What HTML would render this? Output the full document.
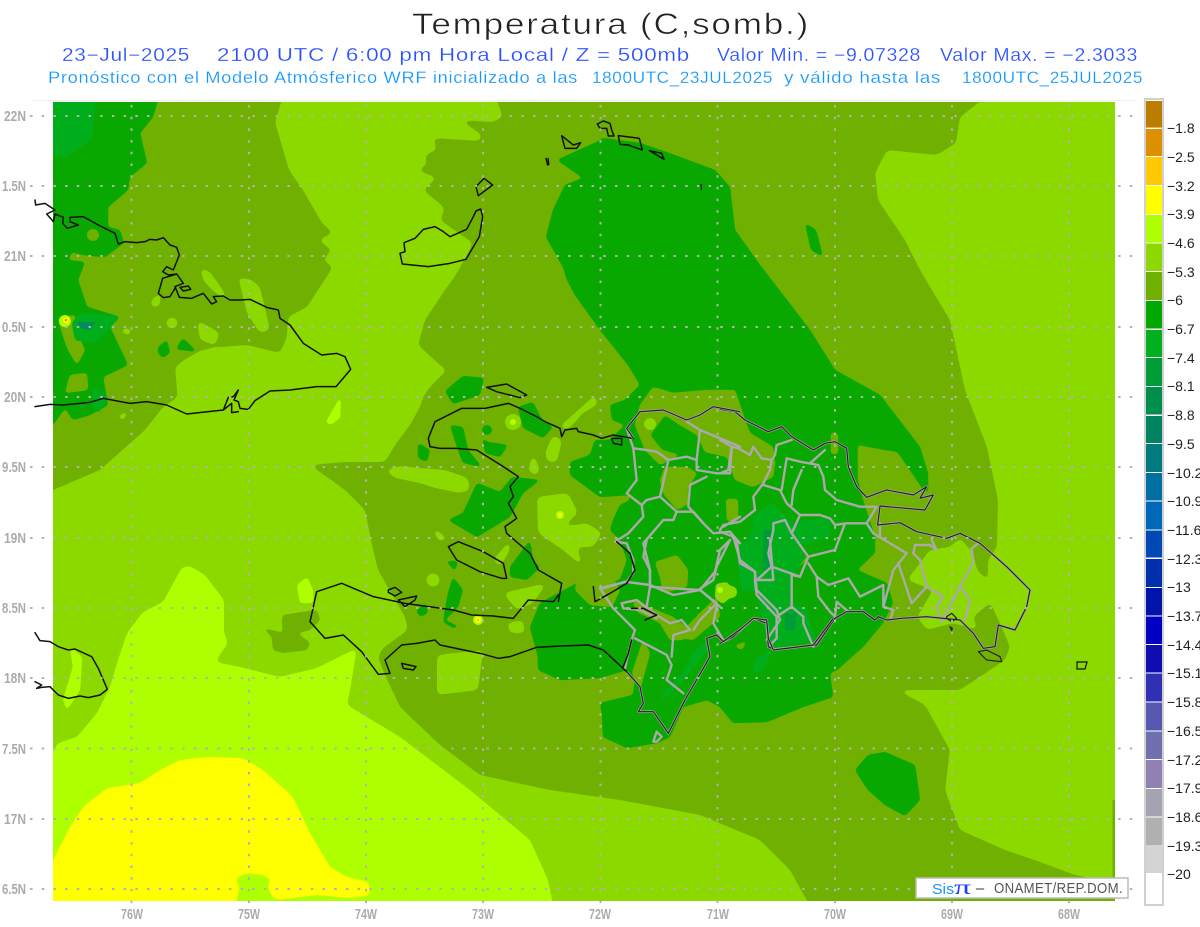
<!DOCTYPE html>
<html><head><meta charset="utf-8"><title>Temperatura (C,somb.)</title>
<style>
html,body{margin:0;padding:0;background:#fff}
svg{display:block}
text{font-family:"Liberation Sans",sans-serif}
.c path,.p path{vector-effect:non-scaling-stroke;fill:none;stroke-linejoin:round;stroke-linecap:round}
.c path{stroke:#111;stroke-width:1.500}
.p path{stroke:#aaa;stroke-width:2.400}
.u path{vector-effect:non-scaling-stroke;fill:none;stroke:#aaa;stroke-width:2.500;stroke-linejoin:round}
.d path{vector-effect:non-scaling-stroke;fill:none;stroke:#222;stroke-width:1.200;stroke-linejoin:round}
.lb text{font-size:15px;font-weight:bold;fill:#ababab}
.cb text{font-size:14px;fill:#222}
</style></head><body>
<svg width="1200" height="927" viewBox="0 0 1200 927" xmlns="http://www.w3.org/2000/svg">
<defs>
<filter id="s3" x="-5%" y="-5%" width="110%" height="110%" color-interpolation-filters="sRGB"><feGaussianBlur stdDeviation="3"/><feComponentTransfer><feFuncA type="linear" slope="14" intercept="-6.500"/></feComponentTransfer></filter>
<filter id="s2" x="-5%" y="-5%" width="110%" height="110%" color-interpolation-filters="sRGB"><feGaussianBlur stdDeviation="1.800"/><feComponentTransfer><feFuncA type="linear" slope="10" intercept="-4"/></feComponentTransfer></filter>
<clipPath id="m"><rect x="53" y="102" width="1062" height="799"/></clipPath>
</defs>
<rect width="1200" height="927" fill="#fff"/>
<text x="412" y="34" font-size="30" letter-spacing="1.500" textLength="398" lengthAdjust="spacingAndGlyphs" fill="#222" stroke="#fff" stroke-width="0.55">Temperatura (C,somb.)</text>
<g font-size="18" fill="#2a50ff" stroke="#fff" stroke-width="0.2" letter-spacing=".6">
<text x="62" y="61" textLength="128" lengthAdjust="spacingAndGlyphs">23−Jul−2025</text>
<text x="217" y="61" textLength="473" lengthAdjust="spacingAndGlyphs">2100 UTC / 6:00 pm Hora Local / Z = 500mb</text>
<text x="717" y="61" textLength="204" lengthAdjust="spacingAndGlyphs">Valor Min. = −9.07328</text>
<text x="940" y="61" textLength="198" lengthAdjust="spacingAndGlyphs">Valor Max. = −2.3033</text>
</g>
<g font-size="16.5" fill="#0f96ff" stroke="#fff" stroke-width="0.2" letter-spacing=".6">
<text x="48" y="83" textLength="530" lengthAdjust="spacingAndGlyphs">Pronóstico con el Modelo Atmósferico WRF inicializado a las</text>
<text x="592" y="83" textLength="181" lengthAdjust="spacingAndGlyphs">1800UTC_23JUL2025</text>
<text x="784" y="83" textLength="157" lengthAdjust="spacingAndGlyphs">y válido hasta las</text>
<text x="962" y="83" textLength="181" lengthAdjust="spacingAndGlyphs">1800UTC_25JUL2025</text>
</g>
<line x1="32" y1="100.5" x2="1135" y2="100.5" stroke="#eee"/>

<g clip-path="url(#m)">
<rect x="53" y="102" width="1062" height="799" fill="#70b000"/>
<!-- light -->
<g fill="#8cd900" filter="url(#s3)">
<path d="M285 90L493 90 503 117 493 122 460 120 482 135 480 141 433 138 437 150 425 155 427 165 417 170 437 178 423 190 445 208 440 220 473 243 457 273 445 290 425 320 418 345 440 365 447 370 430 387 423 397 420 407 410 425 395 445 385 462 345 462 310 465 345 490 365 510 372 545 378 570 405 617 408 630 383 648 378 657 385 675 400 707 440 745 480 775 550 790 620 800 700 815 760 840 790 870 815 915 40 915 40 497 53 490 100 470 145 430 163 407 178 397 177 390 175 367 187 358 202 350 220 347 247 345 280 353 287 337 288 317 307 307 333 267 323 260 332 250 318 240 333 233 322 223 303 190 289 170 275 122Z"/>
<path d="M995 90L1130 90 1130 880 1100 880 1075 875 1040 862 1005 850 960 830 945 790 950 750 925 705 897 690 960 690 1005 660 1010 647 1003 630 988 597 988 560 997 547 998 500 987 447 965 390 950 320 920 270 905 240 878 200 875 173 887 150 937 155 956 143 960 117Z"/>
<path d="M960 538L973 553 977 570 987 580 990 603 973 617 978 630 953 623 927 630 917 617 933 590 907 580 917 567 930 550 950 547Z"/>
<path d="M420 468L445 470 468 478 470 490 460 493 435 488 420 483 395 478 385 470 400 466Z"/>
<path d="M200 267L210 272 223 290 233 313 225 300 212 290 203 280Z"/>
<path d="M238 277L252 280 260 287 270 330 260 333 247 313Z"/>
<path d="M197 320L220 333 215 345 200 340Z"/>
<path d="M175 367L197 357 200 375 210 385 190 380 178 385Z"/>
<path d="M122 327L134 330 128 336 121 332Z"/><circle cx="172" cy="323" r="6"/><circle cx="433" cy="580" r="7"/>
<path d="M150 302L161 291 160 306 152 308Z"/><path d="M115 419L129 408 125 420Z"/>
<path d="M558 428L595 395 598 404 582 414 569 429Z"/>
<path d="M545 453L553 435 562 440 557 462 548 462Z"/><path d="M528 470L533 453 540 470 535 476Z"/>
<path d="M537 497L568 493 578 513 563 527 587 523 602 533 593 547 577 547 583 567 563 550 538 533Z"/>
<path d="M431 525L449 540 438 541Z"/><path d="M493 560L510 540 510 550 500 567Z"/>
<path d="M503 593L547 583 533 603 517 610Z"/><path d="M507 623L523 620 525 633 510 633Z"/>
<path d="M437 655L483 650 478 690 437 695Z"/>
</g>
<!-- olive in light -->
<g fill="#70b000" filter="url(#s2)">
<path d="M263 628L283 633 282 620 283 615 317 610 320 620 310 630 297 633 310 643 307 650 283 653 273 650 272 637Z"/>
</g>
<!-- lime and yellow -->
<g filter="url(#s3)">
<path fill="#aeff00" d="M40 915L40 770 58 743 77 737 97 713 110 687 117 663 127 633 143 612 163 602 182 567 190 566 205 575 224 600 224 633 228 643 215 662 240 667 280 677 317 668 357 648 350 690 347 705 400 737 470 790 530 840 548 880 555 915Z"/>
</g>
<g fill="#aeff00" filter="url(#s2)">
<path d="M70 647L82 657 80 690 67 710 63 700 73 667Z"/>
<path d="M326 422L341 396 340 418 330 425Z"/>
<path d="M297 585L307 577 313 590 313 603 300 603Z"/>
</g>
<path filter="url(#s3)" fill="#ffff00" d="M40 915L53 860 70 827 83 807 107 788 140 783 160 770 180 760 207 757 243 758 263 770 293 797 310 833 330 867 347 877 369 882 370 896 347 898 317 895 277 900 272 897 267 885 272 880 263 875 248 873 235 878 240 887 233 915Z"/>
<!-- green -->
<g fill="#08a800" filter="url(#s2)">
<path d="M40 90L161 90 153 117 140 133 147 163 130 177 128 190 108 207 108 227 120 230 124 243 105 257 83 255 72 252 68 260 85 262 83 267 78 280 87 307 120 317 110 327 128 365 103 377 107 400 108 405 90 415 73 420 65 408 53 425 40 425Z"/>
<path d="M597 142L603 138 640 143 669 153 715 170 730 187 735 230 760 265 810 330 835 370 880 395 920 447 928 473 928 493 923 490 897 452 858 445 858 480 862 497 875 537 875 553 857 570 887 583 893 603 883 623 863 647 837 670 830 673 833 697 803 707 767 722 733 723 720 707 707 700 683 707 670 737 657 743 627 748 603 737 602 713 600 703 633 695 635 680 627 670 600 678 560 680 538 670 538 657 530 627 540 603 583 580 600 585 620 580 627 560 620 540 610 530 613 520 620 505 630 500 630 495 600 497 570 475 570 462 590 455 595 440 610 440 625 425 612 420 610 405 625 400 640 385 628 365 600 330 575 295 567 280 563 267 546 237 553 210 565 185 583 178 557 160 590 145Z"/>
<path d="M855 770L868 755 885 752 915 765 920 800 905 816 885 805 868 790Z"/>
<path d="M445 391L463 376 484 378 480 395 453 404Z"/>
<path d="M518 407L533 402 542 420 553 427 543 438 523 428Z"/>
<path d="M450 425L463 427 468 450 482 467 463 463 457 447Z"/>
<path d="M482 437L487 442 508 445 500 457 485 453Z"/>
<path d="M418 443L430 450 427 462 418 458Z"/>
<path d="M512 477L540 480 523 493 510 517 477 537 448 520 463 513 477 483 500 492Z"/>
<path d="M510 567L530 540 533 560 540 567 527 580 510 577Z"/>
<path d="M448 593L453 577 463 590 458 607 445 620 460 627 453 628 443 622Z"/>
<path d="M416 610L426 603 428 613 420 617Z"/><path d="M446 561L458 561 455 571Z"/>
<path d="M805 223L816 230 823 257 811 250Z"/>
<path d="M158 347L167 340 170 353 163 358 158 353Z"/><path d="M177 347L183 338 197 352 183 350 177 350Z"/>
<circle cx="487" cy="430" r="5"/>
</g>
<!-- olive over green -->
<g fill="#70b000" filter="url(#s2)">
<path d="M640 405L653 387 673 393 707 390 735 390 745 420 750 433 773 447 775 463 773 477 753 487 735 480 727 457 705 452 697 435 680 425 665 415 650 435 662 450 680 455 660 465 645 450 635 425Z"/>
<path d="M665 467L687 467 697 473 687 490 690 503 677 510 663 493 660 480Z"/>
<path d="M655 562L677 555 688 570 687 587 663 593 660 577Z"/>
<path d="M632 600L673 617 690 630 683 640 670 640 660 623 637 612Z"/>
<path d="M580 560L605 565 620 590 612 607 590 605 575 590Z"/>
<path d="M643 640L650 653 640 690 632 673Z"/>
<path d="M677 637L700 613 717 597 720 617 693 640Z"/>
<path d="M787 560L803 550 807 560 790 573Z"/>
<path d="M726 499L738 499 738 521 727 521Z"/><path d="M831 432L838 434 838 454 831 454Z"/>
<path d="M734 646L747 641 742 650Z"/>
<path d="M858 445L880 450 897 452 923 490 863 497 858 480Z"/>
<path d="M70 375L87 373 88 390 65 393Z"/>
<path d="M58 318L75 315 77 333 85 350 77 365 68 350 62 333Z"/>
<circle cx="93" cy="235" r="6"/>
<path d="M40 425L70 425 75 433 73 445 62 440 40 440Z"/>
</g>
<!-- light spots over green -->
<g fill="#8cd900" filter="url(#s2)">
<path d="M716 584L728 582 731 596 723 604 715 598Z"/><circle cx="513" cy="422" r="8"/><circle cx="650" cy="424" r="6"/>
<circle cx="731" cy="592" r="6"/>
</g>
<!-- lighter greens -->
<g fill="#00ae1c" filter="url(#s2)">
<path d="M40 90L96 90 92 140 63 158 53 153 40 153Z"/>
<path d="M80 313L120 316 102 337 92 343 75 340 72 323Z"/>
<path d="M93 388L102 390 108 400 98 413 92 407Z"/>
<path d="M753 517L772 503 792 523 830 517 830 537 795 547 808 553 792 577 793 603 807 610 815 640 773 648 767 638 757 597 753 570 737 567 740 547 753 533Z"/>
<path d="M660 703L683 680 710 647 707 640 692 653 683 673 663 693Z"/>
<path d="M752 673L757 657 773 650 763 670Z"/>
<path d="M737 555L752 545 755 590 742 592Z"/>
</g>
<g fill="#009c38">
<path d="M763 530L773 530 770 570 763 570Z"/><path d="M785 613L797 613 795 630 785 630Z"/>
</g>
<path fill="#008c60" d="M77 322L95 322 90 330 80 328Z"/>
<g fill="#aeff00"><circle cx="65" cy="321" r="6"/><circle cx="560" cy="515" r="4"/><circle cx="478" cy="620" r="5"/><circle cx="720" cy="590" r="3"/><circle cx="513" cy="422" r="3"/></g>
<g fill="#ffff00"><circle cx="66" cy="320" r="3"/><circle cx="560" cy="515" r="2"/><circle cx="478" cy="620" r="3"/></g>
<circle cx="66" cy="320" r="1.3" fill="#e09000"/><circle cx="478" cy="620" r="1.2" fill="#ffc800"/>
<path d="M1112.500 800h3v100h-3z" fill="#70b000"/>
</g>

<!-- provinces: zoom6 -->
<g class="p" transform="translate(420,370) scale(.33333)">
<path d="M620 175L640 235 680 240 710 245 745 270 800 260 830 270 840 180 800 155"/>
<path d="M840 180L960 230"/>
<path d="M745 270L720 380 680 390 665 405 620 370 650 330 640 235"/>
<path d="M830 270L830 300 890 310 930 310 935 235"/>
<path d="M860 320L810 345 805 410 850 460 880 490 930 485 960 520"/>
<path d="M720 380L770 425 820 425 850 460"/>
<path d="M665 405L670 440 625 490 585 515 620 520 640 570 640 610 620 635 540 655"/>
<path d="M770 425L760 450 730 450 670 520 690 600 690 650 835 660 880 630 890 590 930 510"/>
<path d="M690 650L680 710"/><path d="M960 440L910 470"/>
</g>
<!-- provinces: zoom7 -->
<g class="p" transform="translate(720,390) scale(.33333)">
<path d="M0 150L35 170 55 175 90 195 100 170 125 205 155 210 165 195 170 165 215 150"/>
<path d="M35 170L25 240 0 250"/>
<path d="M155 210L150 240 130 280 100 320 105 360 60 395 10 405 0 420"/>
<path d="M130 285L180 300 200 340 240 375 300 375 330 385 345 405 380 400 440 400 470 350 420 350 350 330 315 300 310 260 295 225 240 215 200 205 185 300"/>
<path d="M245 240L220 300 215 345"/>
<path d="M270 220L315 180"/>
<path d="M240 375L215 430 265 500 345 480 375 400"/>
<path d="M265 500L240 560 155 530 145 490 160 420 160 400 195 390 215 430"/>
<path d="M155 530L105 575 105 545 60 510 40 440 0 425"/>
<path d="M105 575L110 615 170 680 215 650 215 555 240 560"/>
<path d="M170 680L170 745 145 770"/>
<path d="M215 650L250 680 250 700 280 770"/>
<path d="M265 520L290 560 325 585 385 565 420 620 490 585 490 650 520 660 510 690"/>
<path d="M290 560L295 620 330 665 345 680 350 635 385 665"/>
<path d="M440 400L460 430 560 490 520 540 490 650"/>
<path d="M480 400L480 440"/>
<path d="M535 520L575 640 620 590 600 510 580 490 585 465 630 465 650 480 635 450"/>
<path d="M620 590L670 620 650 650 665 695 720 590 750 630 735 690"/>
<path d="M720 590L760 520 755 475 775 460"/>
</g>
<!-- provinces: zoom8 -->
<g class="p" transform="translate(560,540) scale(.33333)">
<path d="M120 145L160 205 225 270 215 300 200 360 195 385"/>
<path d="M225 295L320 345 335 375 320 420 370 460"/>
<path d="M130 145L195 125 270 135 340 165 420 150 480 200"/>
<path d="M260 0L250 50 270 90 270 135"/>
<path d="M420 150L465 95 480 30 510 0"/>
<path d="M420 150L470 190 420 240 400 270"/>
<path d="M470 200L460 250 490 300"/>
<path d="M185 190L230 180 290 225 330 250 365 240 390 270 340 285 335 350"/>
<path d="M185 190L190 205 240 210 290 235"/>
<path d="M530 0L540 70 585 95 590 150 650 210 660 240 620 300"/>
<path d="M590 120L640 120 630 0"/>
<path d="M280 605L290 575 305 590 290 605Z"/>
</g>

<!-- coasts -->
<g class="c" transform="translate(20,190) scale(.33333)">
<path d="M45 30L47 45 75 40 105 60 80 72 100 95 105 72 130 82 128 100 142 115 175 105 150 95 150 82 190 80 235 105 285 130 295 162 315 155 350 158 375 155 390 148 410 150 430 143 450 165 470 172 478 195 460 240 440 230 428 245 445 255 470 252 490 280 465 290 478 322 515 325 550 310 575 342 590 335 580 320 610 318 630 330 660 330 690 328 740 352 775 360 780 385 810 405 850 460 905 495 950 490 975 500 992 538 948 590 890 590 810 600 750 603 705 632 685 658 660 655 655 635 642 630 655 600 640 620 625 622 610 660 635 640 635 668 655 665"/>
<path d="M610 660L500 672 440 645 380 635 330 640 250 625 210 637 130 645 90 643 45 650"/>
<path d="M428 265L415 310 430 323 450 320 465 295"/><path d="M428 265L470 252"/>
<path d="M480 292L505 288 512 298 490 303Z"/>
</g>
<g class="c" transform="translate(0,600) scale(.33333)">
<path d="M105 98L120 122 150 125 175 140 205 150 225 147 275 170 295 205 322 268 300 285 265 293 240 288 205 295 175 285 150 260 125 262 110 265 125 255 105 245"/>
</g>
<g class="c" transform="translate(390,110) scale(.33333)">
<path d="M37 462L30 430 45 425 42 398 75 385 100 358 135 350 160 365 180 380 230 358 250 320 258 303 272 297 278 320 268 380 228 448 180 460 115 470Z"/>
<path d="M258 230L282 205 308 225 265 257Z"/>
<path d="M515 77L550 105 572 98 560 115 525 115Z"/>
<path d="M468 145L473 165"/>
<path d="M622 42L640 33 660 40 665 60 672 78 655 78 650 55 630 55Z"/>
<path d="M685 77L748 85 757 120 715 105 690 103Z"/>
<path d="M778 122L815 130 822 148Z"/>
</g>
<g class="c" transform="translate(420,370) scale(.33333)">
<path d="M200 52L260 42 320 75 300 83 230 65Z"/>
<path d="M85 530L115 515 190 545 250 580 260 625 245 625 180 605 110 570Z"/>
<path d="M30 230L25 205 45 155 125 115 195 115 265 100 300 115 350 140 375 155 420 175 425 200 435 180 470 175 475 185 520 195 545 205 580 195 640 205"/>
<path d="M30 230L60 235 110 235 170 240 250 290 295 320 270 350 280 380 265 400 290 445 255 470 260 490 330 550 355 600 425 640 415 695"/>
<path d="M575 205L605 205 605 225 580 220Z"/>
</g>
<g class="c" transform="translate(290,560) scale(.33333)">
<path d="M810 258L740 262 660 290 625 295 570 280 450 255 435 240 380 250 335 255 285 300 300 340 265 343 215 275 160 225 105 235 60 185 80 95 155 70 250 110 345 130 490 150 545 165 610 168 670 175 715 120 790 125 810 100"/>
<path d="M295 90L315 82 335 97 315 108 295 97Z"/>
<path d="M325 120L380 108 375 120 345 140Z"/>
<path d="M335 310L378 320 370 330 340 325Z"/>
</g>
<!-- DR coast: gray under, dark over -->
<g class="u" transform="translate(720,390) scale(.33333)"><path d="M0 58L45 65 75 90 145 125 185 110 215 140 280 180 315 160 345 155 380 175 385 230 410 290 440 322 500 300 580 315 620 290 600 325 640 315 615 360 480 348 473 405 540 398 590 425 680 445 720 430 780 460 860 530 930 600 920 650 885 720 835 705 825 770 790 775 760 730 720 690 620 680 545 685 500 690 475 680 465 690 430 665 380 665 345 685 290 765 160 778 145 770 140 700 100 685 40 740 0 760"/></g>
<g class="d" transform="translate(720,390) scale(.33333)">
<path d="M0 58L45 65 75 90 145 125 185 110 215 140 280 180 315 160 345 155 380 175 385 230 410 290 440 322 500 300 580 315 620 290 600 325 640 315 615 360 480 348 473 405 540 398 590 425 680 445 720 430 780 460 860 530 930 600 920 650 885 720 835 705 825 770 790 775 760 730 720 690 620 680 545 685 500 690 475 680 465 690 430 665 380 665 345 685 290 765 160 778 145 770 140 700 100 685 40 740 0 760"/>
<path d="M775 785L800 780 840 800 845 815 800 810Z"/>
<path d="M680 680L695 670 710 685 695 695 680 685Z"/>
<path d="M690 710L697 715 695 722Z"/>
</g>
<g class="u" transform="translate(420,370) scale(.33333)"><path d="M640 205L620 175 660 125 730 120 800 150 840 135 880 110 960 125"/></g>
<g class="d" transform="translate(420,370) scale(.33333)"><path d="M640 205L620 175 660 125 730 120 800 150 840 135 880 110 960 125"/></g>
<g class="u" transform="translate(560,540) scale(.33333)"><path d="M820 235L760 315 640 330 625 295 620 240 580 235 545 265 490 305 470 285 440 295 450 350 375 480 325 580 280 515 235 515 250 490 240 440 200 395"/></g>
<g class="d" transform="translate(560,540) scale(.33333)"><path d="M820 235L760 315 640 330 625 295 620 240 580 235 545 265 490 305 470 285 440 295 450 350 375 480 325 580 280 515 235 515 250 490 240 440 200 395"/></g>
<g class="c" transform="translate(560,540) scale(.33333)">
<path d="M200 395L130 330 85 315 0 318"/>
<path d="M100 140L105 185 150 160 200 130 225 90 210 40 170 5"/>
<path d="M190 380L205 340 215 300"/>
<path d="M215 205L250 205 290 225 255 240"/>
</g>
<path d="M1077 662h10l-2 7h-8z" fill="none" stroke="#111" stroke-width="1.2"/>
<path d="M701 184l.5 6" stroke="#111" stroke-width="1.2"/>
<path d="M548 158l.8 7" stroke="#111" stroke-width="1.4"/>

<!-- grid -->
<g stroke="#b2b2b2" stroke-width="2" stroke-dasharray="2.500 9.200" fill="none">
<path d="M30 116H1135M30 186H1135M30 256H1135M30 327H1135M30 397H1135M30 467H1135M30 538H1135M30 608H1135M30 678H1135M30 748.500H1135M30 819H1135M30 889H1135"/>
<path d="M131.500 105V906M249 105V906M366 105V906M483 105V906M600.500 105V906M717.500 105V906M835 105V906M952 105V906M1069 105V906"/>
</g>

<!-- labels -->
<g class="lb" text-anchor="end">
<text x="26" y="121" textLength="22" lengthAdjust="spacingAndGlyphs">22N</text>
<text x="26" y="191" textLength="24" lengthAdjust="spacingAndGlyphs">1.5N</text>
<text x="26" y="261" textLength="22" lengthAdjust="spacingAndGlyphs">21N</text>
<text x="26" y="332" textLength="24" lengthAdjust="spacingAndGlyphs">0.5N</text>
<text x="26" y="402" textLength="22" lengthAdjust="spacingAndGlyphs">20N</text>
<text x="26" y="472" textLength="24" lengthAdjust="spacingAndGlyphs">9.5N</text>
<text x="26" y="543" textLength="22" lengthAdjust="spacingAndGlyphs">19N</text>
<text x="26" y="613" textLength="24" lengthAdjust="spacingAndGlyphs">8.5N</text>
<text x="26" y="683" textLength="22" lengthAdjust="spacingAndGlyphs">18N</text>
<text x="26" y="754" textLength="24" lengthAdjust="spacingAndGlyphs">7.5N</text>
<text x="26" y="824" textLength="22" lengthAdjust="spacingAndGlyphs">17N</text>
<text x="26" y="894" textLength="24" lengthAdjust="spacingAndGlyphs">6.5N</text>
</g>
<g class="lb">
<text x="121" y="919" textLength="22" lengthAdjust="spacingAndGlyphs">76W</text>
<text x="238" y="919" textLength="22" lengthAdjust="spacingAndGlyphs">75W</text>
<text x="355" y="919" textLength="22" lengthAdjust="spacingAndGlyphs">74W</text>
<text x="472" y="919" textLength="22" lengthAdjust="spacingAndGlyphs">73W</text>
<text x="589" y="919" textLength="22" lengthAdjust="spacingAndGlyphs">72W</text>
<text x="707" y="919" textLength="22" lengthAdjust="spacingAndGlyphs">71W</text>
<text x="824" y="919" textLength="22" lengthAdjust="spacingAndGlyphs">70W</text>
<text x="941" y="919" textLength="22" lengthAdjust="spacingAndGlyphs">69W</text>
<text x="1058" y="919" textLength="22" lengthAdjust="spacingAndGlyphs">68W</text>
</g>

<!-- legend box -->
<rect x="916" y="878" width="212" height="20" fill="#fff" stroke="#bbb" stroke-width="1.500"/>
<text x="932" y="894" font-size="15" fill="#1e90ff" textLength="22" lengthAdjust="spacingAndGlyphs">Sis</text>
<text x="954" y="894" font-size="20" fill="#2040ff" textLength="17" lengthAdjust="spacingAndGlyphs" style="font-family:'Liberation Serif',serif">π</text>
<text x="975" y="894" font-size="15" fill="#444" textLength="10" lengthAdjust="spacingAndGlyphs">−</text>
<text x="994" y="893" font-size="14.500" fill="#555" letter-spacing=".4" textLength="129" lengthAdjust="spacingAndGlyphs">ONAMET/REP.DOM.</text>

<!-- colour bar -->
<rect x="1145" y="99" width="18" height="806" fill="#fff" stroke="#d0d0d0" stroke-width="2"/>
<g>
<rect x="1146" y="101" width="16" height="26.600" fill="#bd7d00"/>
<rect x="1146" y="129" width="16" height="27" fill="#dc9000"/>
<rect x="1146" y="157" width="16" height="28" fill="#ffc800"/>
<rect x="1146" y="186" width="16" height="28" fill="#ffff00"/>
<rect x="1146" y="215" width="16" height="27.500" fill="#aeff00"/>
<rect x="1146" y="243.500" width="16" height="27.500" fill="#8cd900"/>
<rect x="1146" y="272" width="16" height="28" fill="#70b000"/>
<rect x="1146" y="301" width="16" height="27.500" fill="#00a800"/>
<rect x="1146" y="330" width="16" height="27" fill="#00b01c"/>
<rect x="1146" y="358" width="16" height="28" fill="#009c38"/>
<rect x="1146" y="387" width="16" height="27.500" fill="#008e4c"/>
<rect x="1146" y="416" width="16" height="27" fill="#008460"/>
<rect x="1146" y="444" width="16" height="28" fill="#007c80"/>
<rect x="1146" y="473" width="16" height="27.500" fill="#0070a0"/>
<rect x="1146" y="501.500" width="16" height="28" fill="#0068b8"/>
<rect x="1146" y="530.500" width="16" height="27" fill="#0048b4"/>
<rect x="1146" y="559" width="16" height="28" fill="#0030ac"/>
<rect x="1146" y="588" width="16" height="27.500" fill="#0014ac"/>
<rect x="1146" y="616.500" width="16" height="27.500" fill="#0000c4"/>
<rect x="1146" y="645" width="16" height="27.500" fill="#100cb0"/>
<rect x="1146" y="673.500" width="16" height="28" fill="#3030b4"/>
<rect x="1146" y="702.500" width="16" height="28" fill="#5858b0"/>
<rect x="1146" y="731.500" width="16" height="27.500" fill="#7070b0"/>
<rect x="1146" y="760" width="16" height="28" fill="#9080b4"/>
<rect x="1146" y="789" width="16" height="27.500" fill="#a4a4b0"/>
<rect x="1146" y="817.500" width="16" height="27.500" fill="#b0b0b0"/>
<rect x="1146" y="845" width="16" height="28" fill="#d4d4d4"/>
<rect x="1146" y="873" width="16" height="30" fill="#ffffff"/>
</g>
<g class="cb">
<text x="1167" y="133">−1.8</text><text x="1167" y="162">−2.5</text><text x="1167" y="191">−3.2</text><text x="1167" y="219">−3.9</text>
<text x="1167" y="248">−4.6</text><text x="1167" y="277">−5.3</text><text x="1167" y="305">−6</text><text x="1167" y="334">−6.7</text>
<text x="1167" y="363">−7.4</text><text x="1167" y="391">−8.1</text><text x="1167" y="420">−8.8</text><text x="1167" y="449">−9.5</text>
<text x="1167" y="478">−10.2</text><text x="1167" y="506">−10.9</text><text x="1167" y="535">−11.6</text><text x="1167" y="564">−12.3</text>
<text x="1167" y="592">−13</text><text x="1167" y="621">−13.7</text><text x="1167" y="650">−14.4</text><text x="1167" y="678">−15.1</text>
<text x="1167" y="707">−15.8</text><text x="1167" y="736">−16.5</text><text x="1167" y="765">−17.2</text><text x="1167" y="793">−17.9</text>
<text x="1167" y="822">−18.6</text><text x="1167" y="851">−19.3</text><text x="1167" y="879">−20</text>
</g>
</svg>
</body></html>
